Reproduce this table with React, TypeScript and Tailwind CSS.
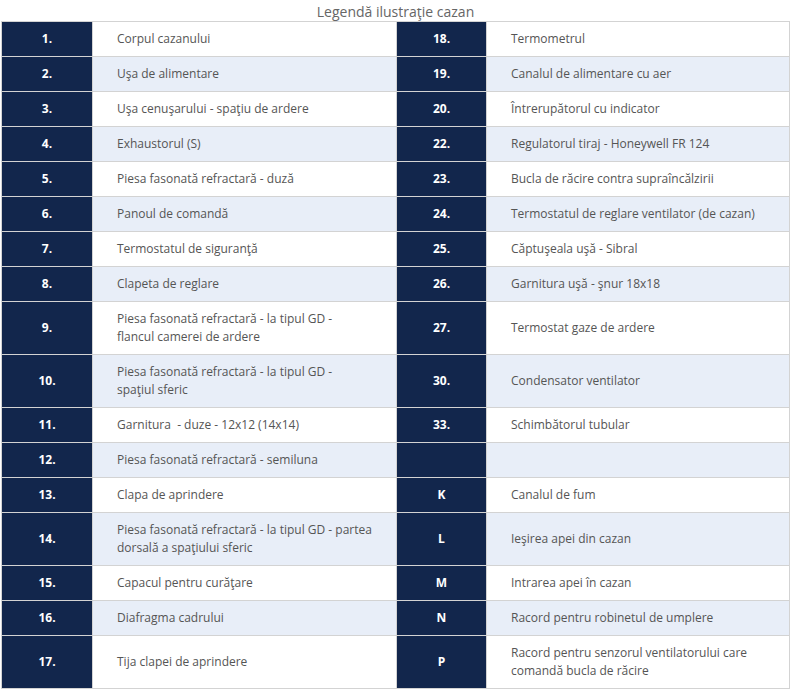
import React from "react";

type Row = { ln: string; lt: string; rn: string; rt: string };

const rows: Row[] = [
  { ln: "1.", lt: "Corpul cazanului", rn: "18.", rt: "Termometrul" },
  { ln: "2.", lt: "Uşa de alimentare", rn: "19.", rt: "Canalul de alimentare cu aer" },
  { ln: "3.", lt: "Uşa cenuşarului - spaţiu de ardere", rn: "20.", rt: "Întrerupătorul cu indicator" },
  { ln: "4.", lt: "Exhaustorul (S)", rn: "22.", rt: "Regulatorul tiraj - Honeywell FR 124" },
  { ln: "5.", lt: "Piesa fasonată refractară - duză", rn: "23.", rt: "Bucla de răcire contra supraîncălzirii" },
  { ln: "6.", lt: "Panoul de comandă", rn: "24.", rt: "Termostatul de reglare ventilator (de cazan)" },
  { ln: "7.", lt: "Termostatul de siguranţă", rn: "25.", rt: "Căptuşeala uşă - Sibral" },
  { ln: "8.", lt: "Clapeta de reglare", rn: "26.", rt: "Garnitura uşă - şnur 18x18" },
  { ln: "9.", lt: "Piesa fasonată refractară - la tipul GD -\nflancul camerei de ardere", rn: "27.", rt: "Termostat gaze de ardere" },
  { ln: "10.", lt: "Piesa fasonată refractară - la tipul GD -\nspaţiul sferic", rn: "30.", rt: "Condensator ventilator" },
  { ln: "11.", lt: "Garnitura\u00a0 - duze - 12x12 (14x14)", rn: "33.", rt: "Schimbătorul tubular" },
  { ln: "12.", lt: "Piesa fasonată refractară - semiluna", rn: "", rt: "" },
  { ln: "13.", lt: "Clapa de aprindere", rn: "K", rt: "Canalul de fum" },
  { ln: "14.", lt: "Piesa fasonată refractară - la tipul GD - partea\ndorsală a spaţiului sferic", rn: "L", rt: "Ieşirea apei din cazan" },
  { ln: "15.", lt: "Capacul pentru curăţare", rn: "M", rt: "Intrarea apei în cazan" },
  { ln: "16.", lt: "Diafragma cadrului", rn: "N", rt: "Racord pentru robinetul de umplere" },
  { ln: "17.", lt: "Tija clapei de aprindere", rn: "P", rt: "Racord pentru senzorul ventilatorului care\ncomandă bucla de răcire" },
];

function NumCell({ v }: { v: string }) {
  return (
    <div className="bg-[#12264c] flex items-center justify-center text-[12px] font-bold text-white leading-[18px]">
      {v}
    </div>
  );
}

function TextCell({ v, light }: { v: string; light: boolean }) {
  const bg = light ? "bg-[#e8eef8]" : "bg-white";
  return (
    <div className={`${bg} flex items-center pl-6 pr-2 py-2 text-[12px] leading-[18px] text-[#555555]`}>
      <span className="whitespace-pre-line">{v}</span>
    </div>
  );
}

export default function App() {
  return (
    <div className="bg-white w-[795px] h-[697px]" style={{ fontFamily: '"Open Sans", "Liberation Sans", sans-serif' }}>
      <div className="ml-px w-[789px]">
        <div className="h-[21px] text-center text-[14px] leading-[24px] text-[#666666]">
          Legendă ilustraţie cazan
        </div>
        <div className="grid grid-cols-[90px_303px_89px_302px] auto-rows-min gap-px p-px bg-[#d3d3d3]">
          {rows.map((r, i) => {
            const light = i % 2 === 1;
            return (
              <React.Fragment key={i}>
                <NumCell v={r.ln} />
                <TextCell v={r.lt} light={light} />
                <NumCell v={r.rn} />
                <TextCell v={r.rt} light={light} />
              </React.Fragment>
            );
          })}
        </div>
      </div>
    </div>
  );
}
